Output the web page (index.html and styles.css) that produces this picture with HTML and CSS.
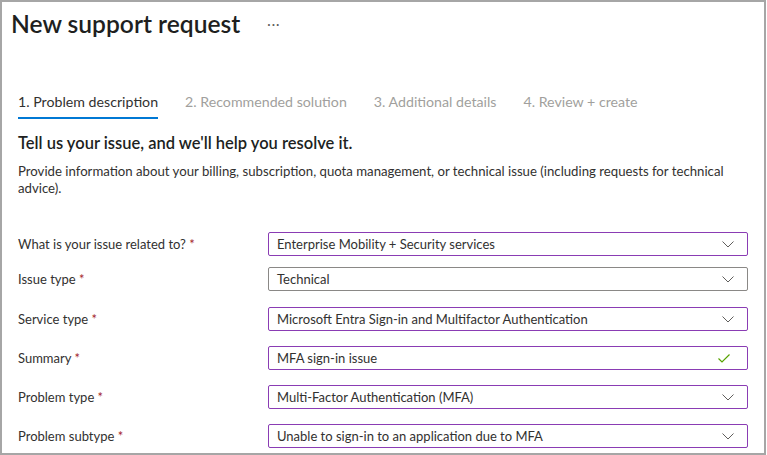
FILE: index.html
```html
<!DOCTYPE html>
<html lang="en">
<head>
<meta charset="utf-8">
<title>New support request</title>
<link rel="stylesheet" href="styles.css">
</head>
<body>
<div class="frame">
  <header class="titlebar">
    <h1 class="title">New support request</h1>
    <span class="more">···</span>
  </header>
  <nav class="tabs">
    <span class="tab active">1. Problem description</span>
    <span class="tab">2. Recommended solution</span>
    <span class="tab">3. Additional details</span>
    <span class="tab">4. Review + create</span>
  </nav>
  <section class="content">
    <h2 class="heading">Tell us your issue, and we'll help you resolve it.</h2>
    <p class="intro">Provide information about your billing, subscription, quota management, or technical issue (including requests for technical advice).</p>
    <div class="form">
      <div class="row first">
        <label class="label">What is your issue related to? <span class="req">*</span></label>
        <div class="field">
          <span class="value">Enterprise Mobility + Security services</span>
          <svg class="chev" width="12" height="7" viewBox="0 0 12 7"><path d="M0.5 0.5 L6 6 L11.5 0.5" fill="none" stroke="#605e5c" stroke-width="1"/></svg>
        </div>
      </div>
      <div class="row second">
        <label class="label">Issue type <span class="req">*</span></label>
        <div class="field gray">
          <span class="value">Technical</span>
          <svg class="chev" width="12" height="7" viewBox="0 0 12 7"><path d="M0.5 0.5 L6 6 L11.5 0.5" fill="none" stroke="#605e5c" stroke-width="1"/></svg>
        </div>
      </div>
      <div class="row third">
        <label class="label">Service type <span class="req">*</span></label>
        <div class="field">
          <span class="value">Microsoft Entra Sign-in and Multifactor Authentication</span>
          <svg class="chev" width="12" height="7" viewBox="0 0 12 7"><path d="M0.5 0.5 L6 6 L11.5 0.5" fill="none" stroke="#605e5c" stroke-width="1"/></svg>
        </div>
      </div>
      <div class="row">
        <label class="label">Summary <span class="req">*</span></label>
        <div class="field">
          <span class="value">MFA sign-in issue</span>
          <svg class="check" width="12" height="9" viewBox="0 0 12 9"><path d="M0.5 4.5 L4 8 L11.5 0.5" fill="none" stroke="#57a300" stroke-width="1.2"/></svg>
        </div>
      </div>
      <div class="row">
        <label class="label">Problem type <span class="req">*</span></label>
        <div class="field">
          <span class="value">Multi-Factor Authentication (MFA)</span>
          <svg class="chev" width="12" height="7" viewBox="0 0 12 7"><path d="M0.5 0.5 L6 6 L11.5 0.5" fill="none" stroke="#605e5c" stroke-width="1"/></svg>
        </div>
      </div>
      <div class="row">
        <label class="label">Problem subtype <span class="req">*</span></label>
        <div class="field">
          <span class="value">Unable to sign-in to an application due to MFA</span>
          <svg class="chev" width="12" height="7" viewBox="0 0 12 7"><path d="M0.5 0.5 L6 6 L11.5 0.5" fill="none" stroke="#605e5c" stroke-width="1"/></svg>
        </div>
      </div>
    </div>
  </section>
</div>
</body>
</html>
```
FILE: styles.css
```css
* { box-sizing: border-box; }
html, body { margin: 0; padding: 0; background: #ffffff; }
body {
  font-family: "Segoe UI", Lato, "Open Sans", sans-serif;
  color: #323130;
  font-size: 13px;
}
.frame {
  width: 766px;
  height: 455px;
  border: 2px solid #a6a6a6;
  overflow: hidden;
  background: #fff;
}
.titlebar {
  display: flex;
  align-items: center;
  padding: 6px 0 0 9px;
  height: 38px;
}
.title {
  margin: 0;
  font-size: 24.6px;
  font-weight: 600;
  color: #201f1e;
  line-height: 32px;
}
.more {
  margin-left: 27px;
  font-size: 13px;
  letter-spacing: 1px;
  color: #605e5c;
}
.tabs {
  display: flex;
  gap: 27px;
  margin-top: 52px;
  padding-left: 16px;
}
.tab {
  font-size: 14.2px;
  line-height: 20px;
  color: #a19f9d;
  padding-bottom: 5px;
  border-bottom: 2px solid transparent;
}
.tab.active {
  color: #323130;
  border-bottom-color: #0078d4;
}
.content {
  padding: 0 16px;
}
.heading {
  margin: 13px 0 0 0;
  font-size: 16.5px;
  font-weight: 600;
  line-height: 22px;
  color: #201f1e;
}
.intro {
  margin: 9px 0 0 0;
  font-size: 13.2px;
  line-height: 17px;
  color: #323130;
  max-width: 720px;
}
.form {
  display: flex;
  flex-direction: column;
  gap: 15px;
  margin-top: 35px;
}
.row {
  display: flex;
  align-items: center;
}
.row.second { margin-top: -4px; }
.row.third { margin-top: 1px; }
.label {
  width: 250px;
  flex: none;
  font-size: 13px;
  color: #323130;
}
.req { color: #a4262c; }
.field {
  width: 480px;
  height: 24px;
  border: 1px solid #8a3cb4;
  border-radius: 2px;
  display: flex;
  align-items: center;
  justify-content: space-between;
  padding: 0 13px 0 8px;
}
.field.gray { border-color: #8a8886; }
.value { font-size: 13px; color: #323130; white-space: nowrap; }
.chev { display: block; }
.check { display: block; margin-right: 4px; }
```
